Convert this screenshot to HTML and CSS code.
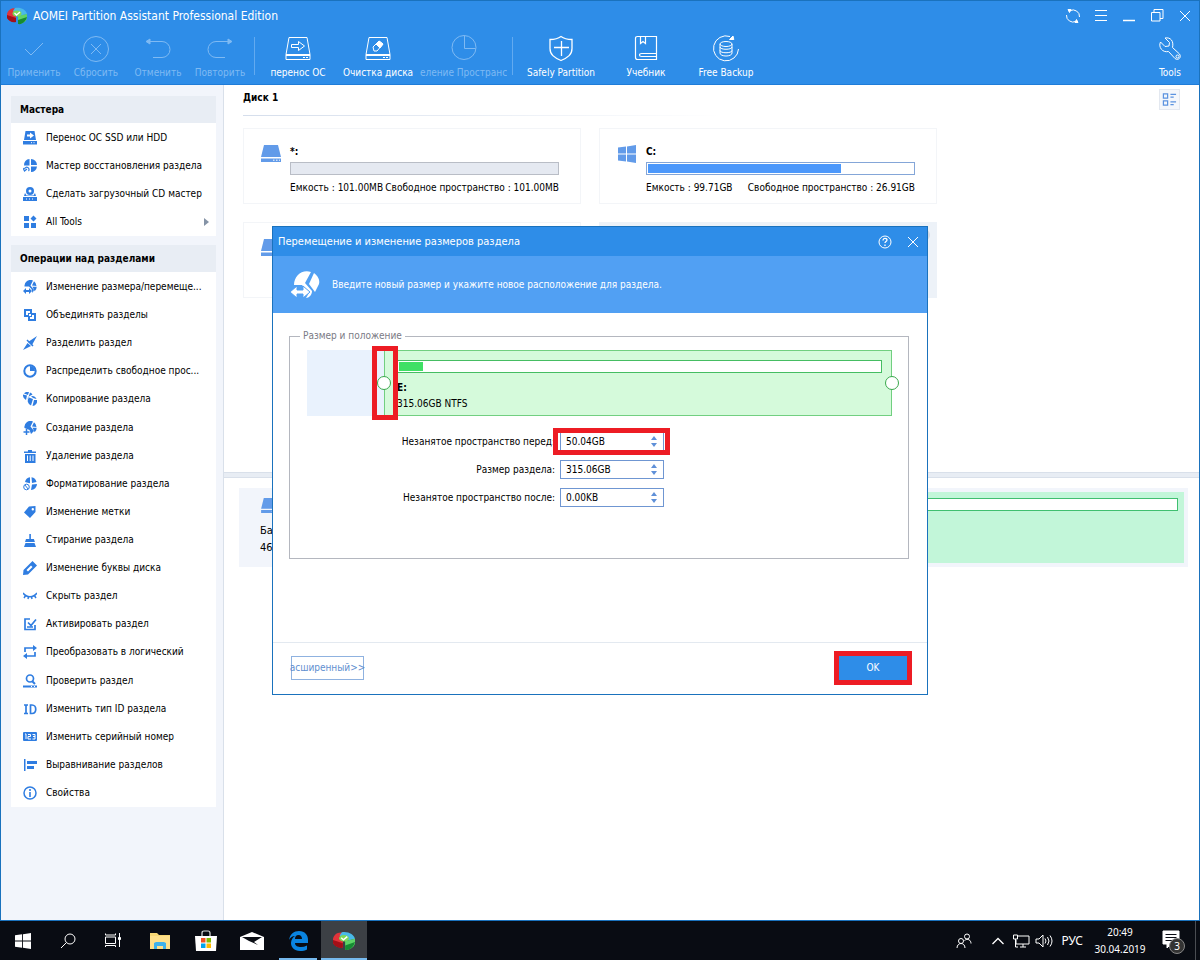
FILE: index.html
```html
<!DOCTYPE html>
<html lang="ru">
<head>
<meta charset="utf-8">
<meta name="viewport" content="width=device-width, initial-scale=1">
<title>AOMEI Partition Assistant Professional Edition</title>
<link rel="stylesheet" href="styles.css">
</head>
<body>
<svg class="sprite" aria-hidden="true">
  <symbol id="aomei" viewBox="0 0 20 18"><path d="M10 2C5 0 1 3 0 7v4c2 3 5 4 9 4V9z" fill="#e0333a"/><path d="M0 8l9 3v4c-4 1-7-1-9-4z" fill="#a30f18"/><path d="M8 1c6-1 11 2 12 6l-8 2-6-5z" fill="#49b9e8"/><path d="M20 7v4c-1 4-5 6-9 6V9z" fill="#5ed367"/><path d="M20 10c-1 4-5 8-9 7v-4z" fill="#168b33"/><ellipse cx="10" cy="6.500" rx="4.500" ry="3" fill="#7ed957"/><path d="M7.500 6l2 2 3.500-3" fill="none" stroke="#fff" stroke-width="1.300"/></symbol>
  <symbol id="check" viewBox="0 0 28 28"><path d="M5 14l6 6L23 8"/></symbol>
  <symbol id="reset" viewBox="0 0 28 28"><circle cx="14" cy="14" r="12.500"/><path d="M9 9l10 10M19 9L9 19"/></symbol>
  <symbol id="undo" viewBox="0 0 28 28"><path d="M5 6.500h13a8 8 0 010 16h-9"/><path d="M2 6.500l4-2.500v5z" fill="currentColor"/></symbol>
  <symbol id="redo" viewBox="0 0 28 28"><path d="M23 6.500H10a8 8 0 000 16h9"/><path d="M26 6.500l-4-2.500v5z" fill="currentColor"/></symbol>
  <symbol id="migrate" viewBox="0 0 28 28"><path d="M5 2.500h18l3 17H2zM2 19.500v5h24v-5M2 20.500h24M19 22.500h2M22 22.500h2"/><path d="M7.500 9.500h7v-3l6 4.500-6 4.500v-3h-7z"/></symbol>
  <symbol id="wipe" viewBox="0 0 28 28"><path d="M5 2.500h18l3 17H2zM2 19.500v5h24v-5M2 20.500h24M19 22.500h2M22 22.500h2"/><path d="M9 12l6-6 4 3-6 7h-3z"/><path d="M12 9l3-3 4 3-3 4z" fill="currentColor"/></symbol>
  <symbol id="pie" viewBox="0 0 28 28"><circle cx="14" cy="12.500" r="12"/><path d="M14.500 1v12.500h11"/></symbol>
  <symbol id="shield" viewBox="0 0 28 28"><path d="M14 1.500c4 3 7 3 11 3v9c0 6-4 9-11 12C7 22.500 3 19.500 3 13.500v-9c4 0 7 0 11-3zM14.500 6v15M7 12.500h15" stroke-width="1.300"/></symbol>
  <symbol id="book" viewBox="0 0 28 28"><path d="M5.500 1.500h19v23h-19q-2 0-2-2v-19q0-2 2-2zM24.500 18.500H9.500q-2 0-2 1.500t2 1.500h15M8.500 1.500v7l2.500-2 2.500 2v-7" stroke-width="1.200"/></symbol>
  <symbol id="backup" viewBox="0 0 28 28"><path d="M18 1.500A12.500 12.500 0 1026.500 14"/><path d="M17.500 4.500L21 1l.8 3.500z" fill="currentColor"/><ellipse cx="14" cy="9" rx="6" ry="2.500"/><path d="M8 9v9c0 4 12 4 12 0V9M8 12c0 3 12 3 12 0M8 15.500c0 3 12 3 12 0"/></symbol>
  <symbol id="wrench" viewBox="0 0 28 28"><path d="M9 3l4.500 4.500-.5 3.500-4 .5L4.500 7c-2.500 5 2 11 8 9.500l6.500 7c3 2.500 7-1 4.500-4.500l-7-6.500C18 6 14.500 2 9 3z"/><circle cx="21.500" cy="21.500" r="1.500"/></symbol>
  <symbol id="refresh" viewBox="0 0 16 16"><path d="M14.500 9A6.500 6.500 0 005 2.700M1.500 7A6.500 6.500 0 0011 13.300"/><path d="M3 1.500h3L4.500 4.500zM13 14.500h-3l1.500-3z" fill="currentColor"/></symbol>
  <symbol id="menu" viewBox="0 0 16 16"><path d="M2 2.500h12M2 7.500h12M2 12.500h12"/></symbol>
  <symbol id="min" viewBox="0 0 16 16"><path d="M2 12.500h12" stroke-width="1.500"/></symbol>
  <symbol id="restore" viewBox="0 0 16 16"><path d="M2.500 4.500h8.500v8.500h-8.500zM5 4V1.500h9v9h-3"/></symbol>
  <symbol id="close" viewBox="0 0 16 16"><path d="M3 3l10 10M13 3L3 13"/></symbol>
  <symbol id="help" viewBox="0 0 16 16"><circle cx="8" cy="8" r="6"/><path d="M6 6.500c0-3 4-2.500 4-.5 0 1.500-2 1.500-2 3M8 10.500V12" stroke-width="1.300"/></symbol>
  <symbol id="view" viewBox="0 0 16 16"><path d="M1.500 2h4.500v4.500H1.500zM1.500 9.500h4.500v4.500H1.500zM9 2.500h6M9 5.500h3.500M9 10.500h6M9 13.500h3.500" fill="none" stroke="#5b93e0" stroke-width="1.300"/></symbol>
  <symbol id="disk" viewBox="0 0 20 18"><path d="M3 0h14l3 12H0zM0 13.500h20V17H0z" fill="#629be9"/><path d="M12 15.200h1.500M15 15.200h1.500M18 15.200h1" stroke="#fff"/></symbol>
  <symbol id="win" viewBox="0 0 18 18"><path d="M0 2.500l8-1V8.500H0zM9 1.400L18 0v8.500H9zM0 9.500h8v7l-8-1zM9 9.500h9V18l-9-1.400z" fill="currentColor"/></symbol>
  <symbol id="s-mig" viewBox="0 0 14 14"><path fill-rule="evenodd" d="M2.500 0h9L13 9H1zM4 3.500v2h3v2l4-3-4-3v2z"/><path d="M0 10h14v3.500H0z"/><path d="M8 11.700h1M10.500 11.700h1" stroke="#fff"/></symbol>
  <symbol id="s-rec" viewBox="0 0 14 14"><path d="M6.500 0v6.500H1A6 6 0 016.500 0zM8 0a6 6 0 016 6H8zM8 7.500h6A6 6 0 018 13z"/><path d="M1.500 10a2.300 2.300 0 114 2M0 9l1.500 3L4 10" fill="none" stroke="currentColor" stroke-width="1.200"/></symbol>
  <symbol id="s-cd" viewBox="0 0 14 14"><path fill-rule="evenodd" d="M7 0a4 4 0 110 8 4 4 0 010-8zm0 2.500a1.500 1.500 0 100 3 1.500 1.500 0 000-3z"/><path d="M2 6l1.500 2.500h7L12 6l1 3H1zM0 10h14v4H0z"/><path d="M3 12h1M6 12h1M9 12h1" stroke="#fff"/></symbol>
  <symbol id="s-all" viewBox="0 0 14 14"><path d="M1 1h5v5H1zM1 8h5v5H1zM8 8h5v5H8zM10.500 .5L13.500 3.500 10.500 6.500 7.500 3.500z"/></symbol>
  <symbol id="s-resize" viewBox="0 0 14 14"><path d="M1.500 6.500A6 6 0 0110 .5L7.500 5.500l3.500 4.500-1.500 3-1-4-2.500-2.500zM11 1.200A6 6 0 0113.500 6L9 5.500zM9.500 6.800l4.200 0a6 6 0 01-2 4.500z"/><path d="M0 11l3-3v2h3V8l3 3-3 3v-2H3v2z"/></symbol>
  <symbol id="s-resize-lg" viewBox="0 0 30 30"><path d="M4 15C4 6 12-1 21 2l-6 11 7 8c0 4-3 7-6 7l3-5-7-8z"/><path d="M24 3c4 3 6 7 5 11l-4 8-6-8z"/><path d="M0 22l7-6v4h6v-4l7 6-7 6v-4H7v4z" stroke="#51a0f3"/></symbol>
  <symbol id="s-merge" viewBox="0 0 14 14"><path fill-rule="evenodd" d="M1 1h8v4h4v8H5V9H1zM3 3v4h2V5h2V3zm6 4v2H7v2h4V7zM6 6v2h2V6z"/></symbol>
  <symbol id="s-split" viewBox="0 0 14 14"><path d="M14 0L9 9 5 6zM4.500 7L8 10 0 14z"/><path d="M4 4l6 6" stroke="currentColor" stroke-width="1.500"/></symbol>
  <symbol id="s-pie" viewBox="0 0 14 14"><circle cx="7" cy="7" r="5.700" fill="none" stroke="currentColor" stroke-width="2"/><path d="M7 2v5h5a5 5 0 00-5-5z"/></symbol>
  <symbol id="s-copy" viewBox="0 0 14 14"><path d="M0 2.500l4 1L3 8A5 5 0 010 4zM1 1.500A5 5 0 016 0L5 3zM7 .5a5 5 0 012.500 2L5 5l-.5 3zM6 5.500l4 1.500-2 6.500a5 5 0 01-2-8zM8 4a5 5 0 015.500 3L10 6zM11 8h3a5 5 0 01-4.500 6z"/></symbol>
  <symbol id="s-create" viewBox="0 0 14 14"><path d="M1.500 7A6 6 0 0110 .5L7.500 5.500l3.500 4.500-3 3-1.500-4zM11 1.200A6 6 0 0113.500 6L9 5.500zM9.500 6.800h4.200a6 6 0 01-2 4.500z"/><path d="M3.500 8v6M.500 11h6" stroke="currentColor" stroke-width="1.500"/></symbol>
  <symbol id="s-del" viewBox="0 0 14 14"><path d="M1 2.500h4V1h4v1.500h4V4H1zM2 5h10.500v9H2z"/><path d="M4.500 6.500v5.500M7.200 6.500v5.500M10 6.500v5.500" stroke="#fff"/></symbol>
  <symbol id="s-format" viewBox="0 0 14 14"><path d="M2 5A6 6 0 017 .2v6zM8.500.2A6 6 0 0113.500 5L9 6zM9 7.500L14 7a6 6 0 01-6 6z"/><circle cx="3.500" cy="10" r="2.800" fill="none" stroke="currentColor"/><path d="M2 8l3 4" stroke="currentColor"/></symbol>
  <symbol id="s-tag" viewBox="0 0 14 14"><path fill-rule="evenodd" d="M6 1.500l6.500-.5v6L7 13 1 7.500zM9.800 3a1.200 1.200 0 100 2.400 1.200 1.200 0 000-2.400z"/></symbol>
  <symbol id="s-wipe" viewBox="0 0 14 14"><path d="M6.300 1h1.600v5h3l1 3H2l1-3h3.300zM2.500 10h9l1.500 4H1z"/></symbol>
  <symbol id="s-pen" viewBox="0 0 14 14"><path fill-rule="evenodd" d="M9.500 0L14 4.500 5 13.500 0 14l.5-5zM8 4.500L3.500 9 5 10.500 9.500 6z"/></symbol>
  <symbol id="s-hide" viewBox="0 0 14 14"><path d="M0 4c4 5 10 5 14 0M3 6l-2 3M5.500 7.500L5 10M8.500 7.500L9 10M11 6l2 3" fill="none" stroke="currentColor" stroke-width="1.500"/></symbol>
  <symbol id="s-act" viewBox="0 0 14 14"><path d="M7 2H2v10.500h10V8M5 5.500l3 3L13 2.500M4 10h6" fill="none" stroke="currentColor" stroke-width="1.700"/></symbol>
  <symbol id="s-conv" viewBox="0 0 14 14"><path d="M2 7V3h9M12 7v4H3" fill="none" stroke="currentColor" stroke-width="1.700"/><path d="M10 0l4 3-4 3zM4 8l-4 3 4 3z"/></symbol>
  <symbol id="s-check" viewBox="0 0 14 14"><circle cx="7" cy="4.500" r="3.500" fill="none" stroke="currentColor" stroke-width="1.700"/><path d="M9 7l3 3M0 12.500h14" stroke="currentColor" stroke-width="2"/><path d="M8 12.500h1M11 12.500h1" stroke="#fff"/></symbol>
  <symbol id="s-id" viewBox="0 0 14 14"><path d="M1 3h4M1 11.500h4M3 3v8.500M7.500 3v8.500h1.500c5 0 5-8.500 0-8.500z" fill="none" stroke="currentColor" stroke-width="1.700"/></symbol>
  <symbol id="s-num" viewBox="0 0 14 14"><rect y="2" width="14" height="9" rx="1"/><path d="M2 4h1v5M5 4.500h2.500v2H5V9h3M9.500 4.500H12V9H9.500M10 6.500h2" fill="none" stroke="#fff"/></symbol>
  <symbol id="s-align" viewBox="0 0 14 14"><path d="M1 1h1.500v12H1zM4 3h10v3H4zM4 8h7v3H4z"/></symbol>
  <symbol id="s-info" viewBox="0 0 14 14"><circle cx="7" cy="7" r="6" fill="none" stroke="currentColor" stroke-width="1.500"/><path d="M6.200 6h1.600v5H6.200zM6.200 3h1.600v2H6.200z"/></symbol>
  <symbol id="t-search" viewBox="0 0 18 18"><circle cx="11" cy="7" r="5"/><path d="M7.500 10.500L2 16"/></symbol>
  <symbol id="t-view" viewBox="0 0 18 18"><path d="M1.500 5h10v6.500h-10zM1.500 1.500V3h10V1.500M1.500 15v-1.500h10V15M15.500 1v14"/><path d="M14.500 5.500h2v2h-2z" fill="currentColor"/></symbol>
  <symbol id="t-folder" viewBox="0 0 22 18"><path d="M1 1h7l2 2h11v14H1z" fill="#f7d774"/><path d="M1 4h20v13H1z" fill="#ffe08a"/><path d="M5 17v-6l2-1h8l2 1v6h-3v-3H8v3z" fill="#3fb1ea"/></symbol>
  <symbol id="t-store" viewBox="0 0 22 22"><path d="M7 6V3q0-2 2-2h4q2 0 2 2v3" fill="none" stroke="#ddd" stroke-width="1.200"/><path d="M0 6h22l-1 15H1z" fill="#fff"/><path d="M6 8h4.500v4.500H6z" fill="#f25022"/><path d="M11.500 8H16v4.500h-4.500z" fill="#7fba00"/><path d="M6 13.500h4.500V18H6z" fill="#00a4ef"/><path d="M11.500 13.500H16V18h-4.500z" fill="#ffb900"/></symbol>
  <symbol id="t-mail" viewBox="0 0 24 18"><path d="M0 5l12-5 12 5v13H0z" fill="#fff"/><path d="M2 5h20l-8 5 4 3-9-4z" fill="#0a0d14"/></symbol>
  <symbol id="t-edge" viewBox="0 0 20 20"><path d="M1 9C2 3 6 0 11 0c6 0 9 4 9 9v3H7c0 3 3 4 6 4 2 0 4-.500 6-1.500v4c-2 1-4 1.500-7 1.500-6 0-9-4-9-8 0-3 2-6 4-7-3 0-5 2-6 4zm6-1h7c0-2-1-4-3.500-4S7 6 7 8z" fill="#0a84e0"/></symbol>
  <symbol id="t-people" viewBox="0 0 18 18"><circle cx="6" cy="9" r="2.500"/><circle cx="12" cy="4.500" r="2.500"/><path d="M2 16c0-6 8-6 8 0M9.500 8.500c3-2.500 6.500-.500 6.500 3"/></symbol>
  <symbol id="t-up" viewBox="0 0 18 18"><path d="M3.500 12L9 6.500l5.500 5.500" stroke-width="1.300"/></symbol>
  <symbol id="t-net" viewBox="0 0 18 18"><path d="M6 4h11v8H4V8M8 15h6M11 12v3M1.500 3h4v4h-4zM3.500 7v8H6"/></symbol>
  <symbol id="t-vol" viewBox="0 0 18 18"><path d="M1 7h3l4-4v12l-4-4H1zM10 6.500q2 2.500 0 5M12.500 5q3 4 0 8M15 3.500q4 5.500 0 11"/></symbol>
  <symbol id="t-note" viewBox="0 0 26 24"><path d="M1 2h16v13H9l-4 4v-4H1z" fill="#fff"/><path d="M3.500 5.500h11M3.500 8.500h11M3.500 11.500h7" stroke="#0a0d14"/></symbol>
</svg>

<div class="window">
  <header class="top">
    <div class="titlebar">
      <svg class="logo"><use href="#aomei"/></svg>
      <h1>AOMEI Partition Assistant Professional Edition</h1>
      <div class="winbtns">
        <button aria-label="Обновить"><svg><use href="#refresh"/></svg></button>
        <button aria-label="Меню"><svg><use href="#menu"/></svg></button>
        <button aria-label="Свернуть"><svg><use href="#min"/></svg></button>
        <button aria-label="Окно"><svg><use href="#restore"/></svg></button>
        <button aria-label="Закрыть"><svg><use href="#close"/></svg></button>
      </div>
    </div>
    <nav class="toolbar">
      <button class="tool small" disabled><svg><use href="#check"/></svg><span>Применить</span></button>
      <button class="tool small" disabled><svg><use href="#reset"/></svg><span>Сбросить</span></button>
      <button class="tool small" disabled><svg><use href="#undo"/></svg><span>Отменить</span></button>
      <button class="tool small" disabled><svg><use href="#redo"/></svg><span>Повторить</span></button>
      <i class="sep"></i>
      <button class="tool"><svg><use href="#migrate"/></svg><span>перенос ОС</span></button>
      <button class="tool"><svg><use href="#wipe"/></svg><span>Очистка диска</span></button>
      <button class="tool clip" disabled><svg><use href="#pie"/></svg><span>еление Пространс</span></button>
      <i class="sep"></i>
      <button class="tool wide"><svg><use href="#shield"/></svg><span>Safely Partition</span></button>
      <button class="tool"><svg><use href="#book"/></svg><span>Учебник</span></button>
      <button class="tool"><svg><use href="#backup"/></svg><span>Free Backup</span></button>
      <button class="tool last"><svg><use href="#wrench"/></svg><span>Tools</span></button>
    </nav>
  </header>

  <div class="content">
    <aside class="sidebar">
      <section class="panel">
        <h2>Мастера</h2>
        <ul>
          <li><button><svg><use href="#s-mig"/></svg>Перенос ОС SSD или HDD</button></li>
          <li><button><svg><use href="#s-rec"/></svg>Мастер восстановления раздела</button></li>
          <li><button><svg><use href="#s-cd"/></svg>Сделать загрузочный CD мастер</button></li>
          <li><button class="more"><svg><use href="#s-all"/></svg>All Tools</button></li>
        </ul>
      </section>
      <section class="panel ops">
        <h2>Операции над разделами</h2>
        <ul>
          <li><button><svg><use href="#s-resize"/></svg>Изменение размера/перемеще...</button></li>
          <li><button><svg><use href="#s-merge"/></svg>Объединять разделы</button></li>
          <li><button><svg><use href="#s-split"/></svg>Разделить раздел</button></li>
          <li><button><svg><use href="#s-pie"/></svg>Распределить свободное прос...</button></li>
          <li><button><svg><use href="#s-copy"/></svg>Копирование раздела</button></li>
          <li><button><svg><use href="#s-create"/></svg>Создание раздела</button></li>
          <li><button><svg><use href="#s-del"/></svg>Удаление раздела</button></li>
          <li><button><svg><use href="#s-format"/></svg>Форматирование раздела</button></li>
          <li><button><svg><use href="#s-tag"/></svg>Изменение метки</button></li>
          <li><button><svg><use href="#s-wipe"/></svg>Стирание раздела</button></li>
          <li><button><svg><use href="#s-pen"/></svg>Изменение буквы диска</button></li>
          <li><button><svg><use href="#s-hide"/></svg>Скрыть раздел</button></li>
          <li><button><svg><use href="#s-act"/></svg>Активировать раздел</button></li>
          <li><button><svg><use href="#s-conv"/></svg>Преобразовать в логический</button></li>
          <li><button><svg><use href="#s-check"/></svg>Проверить раздел</button></li>
          <li><button><svg><use href="#s-id"/></svg>Изменить тип ID раздела</button></li>
          <li><button><svg><use href="#s-num"/></svg>Изменить серийный номер</button></li>
          <li><button><svg><use href="#s-align"/></svg>Выравнивание разделов</button></li>
          <li><button><svg><use href="#s-info"/></svg>Свойства</button></li>
        </ul>
      </section>
    </aside>

    <main class="main">
      <section class="volumes">
        <div class="diskhead">
          <h2>Диск 1</h2>
          <button class="viewbtn" aria-label="Вид"><svg><use href="#view"/></svg></button>
        </div>
        <div class="cards">
          <article class="card">
            <svg class="drive"><use href="#disk"/></svg>
            <div class="info">
              <b>*:</b>
              <div class="usage empty"></div>
              <p><span>Емкость : 101.00MB</span><span>Свободное пространство : 101.00MB</span></p>
            </div>
          </article>
          <article class="card">
            <svg class="drive"><use href="#win"/></svg>
            <div class="info">
              <b>C:</b>
              <div class="usage"><i style="width:73%"></i></div>
              <p><span>Емкость : 99.71GB</span><span>Свободное пространство : 26.91GB</span></p>
            </div>
          </article>
          <article class="card"><svg class="drive"><use href="#disk"/></svg></article>
          <article class="card selected"></article>
        </div>
      </section>
      <section class="diskmap">
        <div class="diskrow">
          <div class="disklabel">
            <svg class="drive"><use href="#disk"/></svg>
            <span>Базовый</span>
            <span>465.76GB</span>
          </div>
          <div class="part"><div class="partbar"></div></div>
        </div>
      </section>
    </main>
  </div>

  <div class="overlay">
    <form class="dialog" role="dialog" aria-labelledby="dlg-title">
      <div class="dlghead">
        <h2 id="dlg-title">Перемещение и изменение размеров раздела</h2>
        <button type="button" aria-label="Справка"><svg><use href="#help"/></svg></button>
        <button type="button" aria-label="Закрыть"><svg><use href="#close"/></svg></button>
      </div>
      <div class="banner">
        <svg><use href="#s-resize-lg"/></svg>
        <p>Введите новый размер и укажите новое расположение для раздела.</p>
      </div>
      <div class="dlgbody">
        <fieldset>
          <legend>Размер и положение</legend>
          <div class="slider">
            <div class="free"></div>
            <div class="volume">
              <div class="volbar"><i style="width:5%"></i></div>
              <b>E:</b>
              <span>315.06GB NTFS</span>
              <i class="knob start"></i>
              <i class="knob end"></i>
              <i class="mark"></i>
            </div>
          </div>
          <div class="fields">
            <label for="before">Незанятое пространство перед:</label>
            <div class="spin marked"><input id="before" type="text" value="50.04GB"><span class="arrows"><button type="button" aria-label="Больше"></button><button type="button" aria-label="Меньше"></button></span></div>
            <label for="size">Размер раздела:</label>
            <div class="spin"><input id="size" type="text" value="315.06GB"><span class="arrows"><button type="button" aria-label="Больше"></button><button type="button" aria-label="Меньше"></button></span></div>
            <label for="after">Незанятое пространство после:</label>
            <div class="spin"><input id="after" type="text" value="0.00KB"><span class="arrows"><button type="button" aria-label="Больше"></button><button type="button" aria-label="Меньше"></button></span></div>
          </div>
        </fieldset>
      </div>
      <div class="dlgfoot">
        <button type="button" class="adv"><span>асширенный&gt;&gt;</span></button>
        <button type="button" class="ok">OK</button>
      </div>
    </form>
  </div>
</div>

<footer class="taskbar">
  <button class="app first" aria-label="Пуск"><svg class="i16"><use href="#win"/></svg></button>
  <button class="app" aria-label="Поиск"><svg class="i18"><use href="#t-search"/></svg></button>
  <button class="app view" aria-label="Представление задач"><svg class="i18"><use href="#t-view"/></svg></button>
  <button class="app" aria-label="Проводник"><svg class="i22"><use href="#t-folder"/></svg></button>
  <button class="app" aria-label="Магазин"><svg class="i22"><use href="#t-store"/></svg></button>
  <button class="app" aria-label="Почта"><svg class="i24"><use href="#t-mail"/></svg></button>
  <button class="app open" aria-label="Edge"><svg class="i20"><use href="#t-edge"/></svg></button>
  <button class="app open active" aria-label="AOMEI"><svg class="i22"><use href="#aomei"/></svg></button>
  <div class="tray">
    <button class="people" aria-label="Люди"><svg class="i18"><use href="#t-people"/></svg></button>
    <button aria-label="Скрытые значки"><svg class="i18"><use href="#t-up"/></svg></button>
    <button aria-label="Сеть"><svg class="i18"><use href="#t-net"/></svg></button>
    <button aria-label="Громкость"><svg class="i18"><use href="#t-vol"/></svg></button>
    <span class="lang">РУС</span>
    <div class="clock"><time>20:49</time><time>30.04.2019</time></div>
    <button class="notes" aria-label="Уведомления"><svg><use href="#t-note"/></svg><span>3</span></button>
    <i class="showdesk"></i>
  </div>
</footer>
</body>
</html>
```
FILE: styles.css
```css
* { box-sizing: border-box; }
body {
  margin: 0;
  min-height: 100vh;
  display: flex;
  flex-direction: column;
  font: 10px/16px "DejaVu Sans Condensed", "DejaVu Sans", sans-serif;
  color: #000;
  background: #fff;
}
h1, h2, p, ul { margin: 0; padding: 0; font: inherit; list-style: none; }
button { border: 0; padding: 0; background: none; font: inherit; color: inherit; }
svg { display: block; flex: none; }
.sprite { position: absolute; width: 0; height: 0; }

.window {
  position: relative;
  flex: 1;
  display: flex;
  flex-direction: column;
  border: 1px solid #1a72bd;
}

.top { background: #2e8de8; color: #fff; height: 84px; border-bottom: 1px solid #1f7cd8; }
.top svg { fill: none; stroke: currentColor; }
.titlebar { display: flex; align-items: center; height: 29px; padding: 0 6px; }
.titlebar .logo { width: 20px; height: 18px; stroke: none; margin-right: 6px; }
.titlebar h1 { font-size: 12px; }
.winbtns { display: flex; margin-left: auto; gap: 12px; }
.winbtns svg { width: 16px; height: 16px; }
.toolbar { display: flex; padding-left: 2px; }
.tool {
  width: 80px;
  height: 54px;
  display: flex;
  flex-direction: column;
  align-items: center;
  gap: 2px;
  padding-top: 5px;
  white-space: nowrap;
}
.tool svg { width: 28px; height: 28px; }
.tool:disabled { color: #7fbaf3; }
.tool.small { width: 62px; }
.tool.wide { width: 90px; }
.tool.clip { width: 87px; overflow: hidden; margin: 0 2px; }
.tool.last { width: 58px; margin-left: auto; }
.sep { width: 1px; height: 38px; margin: 7px 3px 0; background: #62aaf0; }

.content { flex: 1; display: flex; }
.sidebar {
  width: 223px;
  flex: none;
  padding: 11px 7px 0 10px;
  background: #f2f5fb;
  border-right: 1px solid #d9e0ea;
}
.panel { background: #fff; margin-bottom: 10px; }
.panel h2 { height: 27px; line-height: 28px; padding-left: 9px; font-weight: bold; background: #e8edf4; }
.panel ul { padding-top: 1px; margin-bottom: -1px; }
.panel.ops ul { display: flex; flex-direction: column; justify-content: space-between; min-height: 535px; }
.panel button {
  width: 100%;
  height: 28px;
  display: flex;
  align-items: center;
  gap: 9px;
  padding-left: 12px;
  white-space: nowrap;
  text-align: left;
}
.panel svg { width: 14px; height: 14px; color: #2f7de1; fill: currentColor; }
.more::after {
  content: "";
  margin: 0 7px 0 auto;
  border: 4px solid transparent;
  border-left: 5px solid #8593a6;
  border-right: 0;
}

.main { flex: 1; min-width: 0; display: flex; flex-direction: column; }
.volumes { height: 393px; padding-left: 19px; border-bottom: 1px solid #d9e0ea; }
.diskhead {
  display: flex;
  justify-content: space-between;
  align-items: flex-start;
  height: 31px;
  padding: 4px 19px 0 0;
  background: linear-gradient(90deg, #d5deec, #fff) left bottom / 480px 1px no-repeat;
}
.diskhead h2 { font-weight: bold; line-height: 18px; }
.viewbtn { padding: 2px; background: #f4f7fb; border: 1px solid #e3e8f0; }
.viewbtn svg { width: 15px; height: 15px; }
.cards { display: grid; grid-template-columns: repeat(2, 338px); grid-auto-rows: 76px; gap: 18px; padding-top: 12px; }
.card { display: flex; padding: 16px 21px 0 17px; border: 1px solid #f3f5f8; }
.card .drive { width: 20px; height: 18px; color: #629be9; margin-right: 9px; }
.card b { display: block; line-height: 14px; }
.card p { display: flex; justify-content: space-between; white-space: nowrap; padding-top: 5px; }
.info { flex: 1; min-width: 0; }
.usage { height: 13px; margin-top: 3px; padding: 1px; border: 1px solid #84a6d8; background: #fff; }
.usage i { display: block; height: 100%; background: #4c98fb; }
.usage.empty { border-color: #b9bdc6; background: #e5e9f1; }
.card.selected { background: #edf2f8; border-color: #edf2f8; justify-content: flex-end; padding: 6px; }
.card.selected::after { content: ""; width: 12px; height: 12px; border-radius: 50%; background: #d3dae4; }
.diskmap { flex: 1; padding: 10px 11px 0 15px; border-top: 1px solid #d9e0ea; background: #fff; }
.volumes { margin-bottom: 4px; box-shadow: 0 4px #e8edf4; height: 388px; }
.diskrow { display: flex; height: 79px; padding: 4px 4px 4px 0; background: #f2f5fb; }
.disklabel { width: 100px; padding: 6px 0 0 21px; font-size: 11px; line-height: 17px; }
.disklabel .drive { width: 20px; height: 16px; margin-bottom: 8px; }
.part { flex: 1; padding: 6px; background: #c2f6d9; }
.partbar { height: 13px; background: #fff; border: 1px solid #3fbf70; }

.overlay { position: absolute; inset: 0; display: flex; align-items: center; justify-content: center; }
.dialog {
  width: 656px;
  min-height: 469px;
  display: flex;
  flex-direction: column;
  border: 1px solid #1a72bd;
  background: #fff;
}
.dlghead { display: flex; align-items: center; height: 29px; padding: 0 6px 0 5px; gap: 12px; color: #fff; background: #2e8de8; }
.dlghead h2 { font-size: 11px; margin-right: auto; }
.dlghead svg { width: 16px; height: 16px; fill: none; stroke: currentColor; }
.banner { display: flex; align-items: center; gap: 12px; height: 57px; padding-left: 17px; color: #fff; background: #51a0f3; }
.banner svg { width: 30px; height: 30px; fill: currentColor; }
.dlgbody { flex: 1; padding: 15px 18px 0 16px; }
fieldset { margin: 0; height: 231px; padding: 6px 16px 0 17px; border: 1px solid #b4b7bf; min-width: 0; }
legend { margin-left: -7px; padding: 0 3px; color: #7a7a84; }
.slider { display: flex; height: 66px; }
.free { width: 77px; background: #e9f2fd; }
.volume {
  position: relative;
  flex: 1;
  display: flex;
  flex-direction: column;
  padding: 9px 9px 0 12px;
  border: 1px solid #71cf80;
  background: #d5fadb;
}
.volbar { height: 13px; padding: 1px; background: #fff; border: 1px solid #45bd62; margin-bottom: 7px; }
.volbar i { display: block; height: 100%; background: #3fe065; }
.knob { position: absolute; top: 25px; width: 14px; height: 14px; border: 1px solid #3aa84c; border-radius: 50%; background: #fff; z-index: 1; }
.knob.start { left: -8px; }
.knob.end { right: -8px; }
.mark { position: absolute; left: -13px; top: -5px; width: 26px; height: 74px; border: 5px solid #ed1c24; }
.fields {
  display: grid;
  grid-template-columns: 248px 104px;
  grid-auto-rows: 19px;
  gap: 9px 5px;
  align-items: center;
  padding-top: 16px;
  text-align: right;
  white-space: nowrap;
}
.spin { position: relative; display: flex; height: 19px; border: 1px solid #6f96d2; background: #fff; }
.spin input { flex: 1; min-width: 0; border: 0; padding: 0 0 0 5px; font: inherit; background: none; outline: 0; }
.spin.marked::after { content: ""; position: absolute; inset: -5px -7px -5px -8px; border: 5px solid #ed1c24; pointer-events: none; }
.arrows { width: 18px; display: flex; flex-direction: column; align-items: center; justify-content: center; gap: 3px; }
.arrows button { width: 0; height: 0; border: 3px solid transparent; border-top: 0; border-bottom: 4px solid #5f90d8; }
.arrows button + button { border-top: 4px solid #5f90d8; border-bottom: 0; }
.dlgfoot { display: flex; align-items: center; justify-content: space-between; height: 52px; padding: 0 15px 2px 18px; border-top: 1px solid #e3e9f0; }
.adv { width: 73px; height: 24px; display: flex; align-items: center; justify-content: center; border: 1px solid #8fb2e0; color: #5f8fd0; white-space: nowrap; }
.ok { width: 78px; height: 34px; border: 5px solid #ed1c24; color: #fff; background: #2e8de8; }

.taskbar { display: flex; height: 39px; background: #090c13; color: #fff; }
.taskbar svg { fill: none; stroke: currentColor; }
.app { width: 46px; display: flex; align-items: center; justify-content: center; }
.app.first { width: 45px; }
.app.view { padding-right: 3px; }
.app svg { stroke: none; }
.app .i18 { stroke: currentColor; }
.i16 { width: 16px; height: 16px; }
.i18 { width: 18px; height: 18px; }
.i20 { width: 20px; height: 20px; }
.i22 { width: 22px; height: 22px; }
.i24 { width: 24px; height: 20px; }
.app.open { background: linear-gradient(#76b9ed, #76b9ed) center bottom / 38px 2px no-repeat; }
.app.active { background: linear-gradient(#76b9ed, #76b9ed) center bottom / 46px 2px no-repeat, #3c4045; }
.tray { display: flex; align-items: center; gap: 5px; margin-left: auto; font: 12px/17px "Noto Sans", sans-serif; }
.tray .people { margin-right: 11px; }
.lang { padding-left: 3px; }
.clock { width: 60px; display: flex; flex-direction: column; text-align: center; white-space: nowrap; margin-left: 2px; font-size: 10px; }
.notes { position: relative; width: 26px; margin-left: 7px; }
.notes svg { width: 26px; height: 24px; }
.notes span { position: absolute; left: 7px; top: 9px; width: 16px; height: 16px; border: 1px solid #888; border-radius: 50%; background: #333; font-size: 10px; line-height: 14px; }
.showdesk { align-self: stretch; width: 5px; border-left: 1px solid #4a4d52; margin-left: 2px; }
```
